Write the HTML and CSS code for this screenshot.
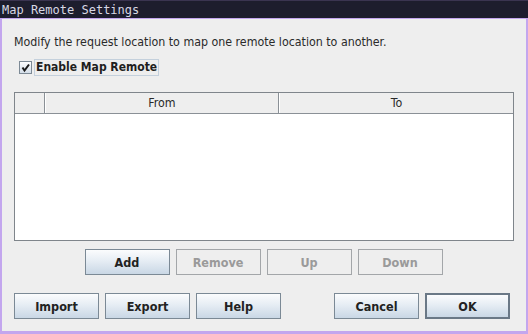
FILE: index.html
```html
<!DOCTYPE html>
<html>
<head>
<meta charset="utf-8">
<link rel="stylesheet" href="styles.css">
</head>
<body>
<div class="window">
  <div class="titlebar">Map Remote Settings</div>
  <div class="frame">
    <div class="content">
      <p class="desc">Modify the request location to map one remote location to another.</p>
      <div class="check-row">
        <span class="box"><svg width="11" height="11" viewBox="0 0 11 11"><path d="M2.5 5.5 L4.5 8.5 L9 2.5" fill="none" stroke="#1a1a1a" stroke-width="2"/></svg></span>
        <span class="check-label">Enable Map Remote</span>
      </div>
      <div class="table">
        <div class="thead">
          <div class="th th-first"></div>
          <div class="th th-col">From</div>
          <div class="th th-col th-last">To</div>
        </div>
        <div class="tbody"></div>
      </div>
      <div class="row1">
        <button class="btn">Add</button>
        <button class="btn disabled">Remove</button>
        <button class="btn disabled">Up</button>
        <button class="btn disabled">Down</button>
      </div>
      <div class="row2">
        <div class="group">
          <button class="btn">Import</button>
          <button class="btn">Export</button>
          <button class="btn">Help</button>
        </div>
        <div class="group">
          <button class="btn">Cancel</button>
          <button class="btn default">OK</button>
        </div>
      </div>
    </div>
  </div>
</div>
</body>
</html>
```
FILE: styles.css
```css
html, body {
  margin: 0;
  padding: 0;
  background: #c3a6ee;
}
.window {
  width: 528px;
  height: 334px;
  display: flex;
  flex-direction: column;
  background: #c3a6ee;
}
.titlebar {
  height: 18px;
  background: #1d1d2d;
  color: #d8d8e4;
  font-family: "DejaVu Sans Mono", monospace;
  font-size: 12px;
  line-height: 18px;
  padding-left: 2px;
  border-top: 1px solid #3a3450;
  box-sizing: border-box;
  white-space: nowrap;
}
.frame {
  flex: 1;
  padding: 1px 3px 3px 2px;
  display: flex;
}
.content {
  flex: 1;
  background: #eeeeee;
  padding: 15px 12px 0 12px;
  font-family: "DejaVu Sans Condensed", "DejaVu Sans", sans-serif;
  font-size: 12.3px;
  color: #222;
}
.desc {
  margin: 0;
  line-height: 16px;
  color: #2a2a2a;
}
.check-row {
  margin-top: 9px;
  height: 17px;
  display: flex;
  align-items: center;
  padding-left: 5px;
}
.box {
  width: 11px;
  height: 11px;
  border: 1px solid #7d8a96;
  background: linear-gradient(#fdfdfe, #d3dde8);
  display: flex;
  align-items: center;
  justify-content: center;
}
.check-label {
  margin-left: 2px;
  font-size: 12px;
  font-weight: bold;
  color: #1e1e1e;
  border: 1px solid #c4d0dc;
  padding: 0 1px;
  line-height: 15px;
}
.table {
  margin-top: 16px;
  height: 149px;
  border: 1px solid #7f858b;
  background: #ffffff;
  box-sizing: border-box;
  display: flex;
  flex-direction: column;
}
.thead {
  display: flex;
  height: 21px;
  background: #eeeeee;
  border-bottom: 1px solid #8a9096;
  box-sizing: border-box;
}
.th {
  height: 100%;
  box-sizing: border-box;
  display: flex;
  align-items: center;
  justify-content: center;
  color: #2a2a2a;
  border-left: 1px solid #ffffff;
}
.th-first {
  width: 30px;
  border-left: none;
  border-right: 1px solid #8a9096;
}
.th-col {
  width: 234px;
  border-right: 1px solid #8a9096;
}
.th-last {
  flex: 1;
  border-right: none;
}
.tbody {
  flex: 1;
  background: #ffffff;
}
.row1 {
  margin-top: 8px;
  display: flex;
  justify-content: center;
  gap: 6px;
  padding-right: 1px;
}
.row2 {
  margin-top: 18px;
  display: flex;
  justify-content: space-between;
  padding-right: 4px;
}
.group {
  display: flex;
  gap: 6px;
}
.btn {
  width: 85px;
  height: 26px;
  margin: 0;
  padding: 0;
  border: 1px solid #7b8995;
  background: linear-gradient(#fbfcfd 0%, #e6edf4 45%, #c9d7e5 100%);
  font-family: "DejaVu Sans Condensed", "DejaVu Sans", sans-serif;
  font-size: 12.5px;
  font-weight: bold;
  color: #222;
  box-sizing: border-box;
}
.btn.disabled {
  background: #eeeeee;
  border-color: #a3a6a9;
  color: #9a9a9a;
}
.btn.default {
  border: 2px solid #6a7886;
}
```
